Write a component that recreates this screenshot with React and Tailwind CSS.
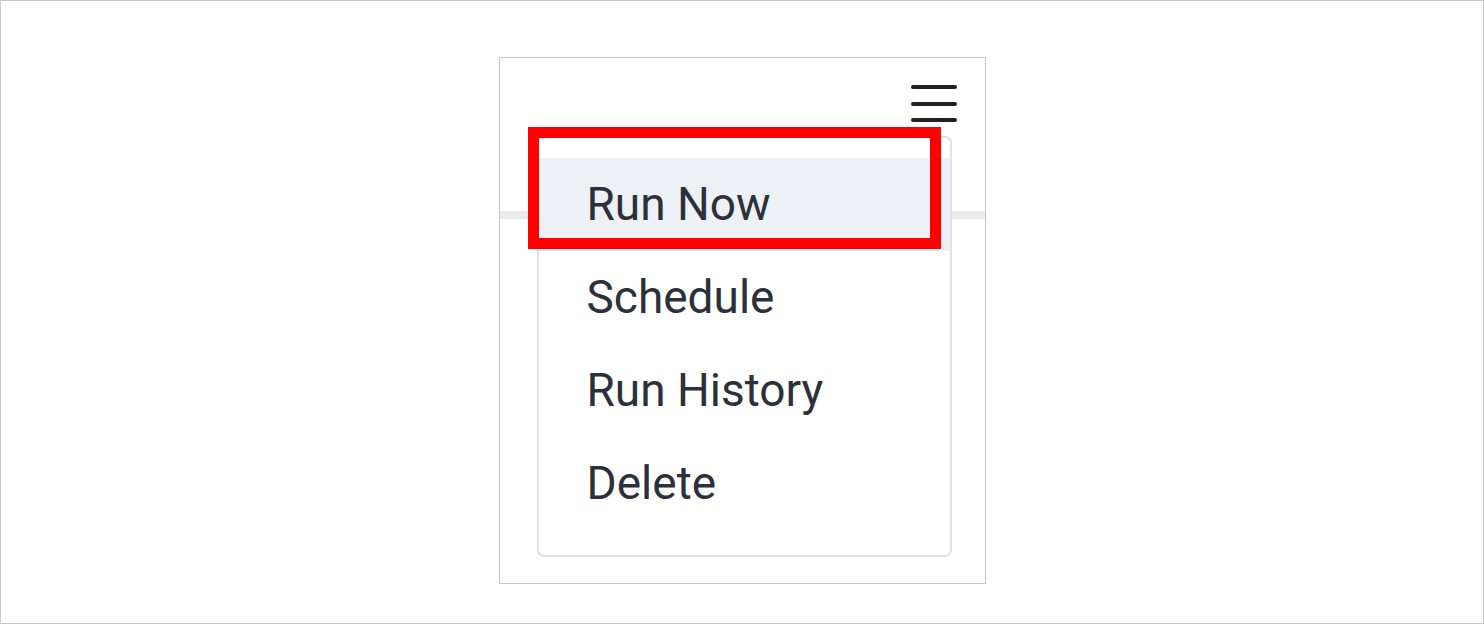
export default function App() {
    const items = ['Run Now', 'Schedule', 'Run History', 'Delete'];

    return (
        <div className="w-[1484px] h-[624px] bg-white border border-[#c8c8c8] flex justify-center pt-[56px] overflow-hidden" style={{ fontFamily: 'Roboto, "Noto Sans", sans-serif' }}>
            <div className="relative w-[487px] h-[527px] border border-[#c8c8c8] bg-white">
                {/* toolbar with menu toggle */}
                <div className="flex justify-end pt-[27px] pr-[28px]">
                    <button className="flex flex-col gap-[12.5px]">
                        <span className="block w-[46px] h-[4px] rounded-full bg-[#222]" />
                        <span className="block w-[46px] h-[4px] rounded-full bg-[#222]" />
                        <span className="block w-[46px] h-[4px] rounded-full bg-[#222]" />
                    </button>
                </div>
                <div className="mt-[89px] h-[8px] bg-[#ebebeb]" />

                {/* dropdown */}
                <div className="absolute left-[37px] top-[78px] w-[415px] h-[421px] bg-white border-2 border-[#e2e2e2] rounded-[7px] pt-[20px]">
                    {items.map((item, i) => (
                        <div
                            key={item}
                            className={`h-[93px] flex items-center pl-[48px] text-[46px] text-[#2b303b] ${i === 0 ? 'bg-[#edf1f6]' : ''}`}
                        >
                            {item}
                        </div>
                    ))}
                </div>

                {/* highlight annotation */}
                <div className="absolute left-[28px] top-[69px] w-[413px] h-[122px] border-[11px] border-[#ff0000]" />
            </div>
        </div>
    );
}
